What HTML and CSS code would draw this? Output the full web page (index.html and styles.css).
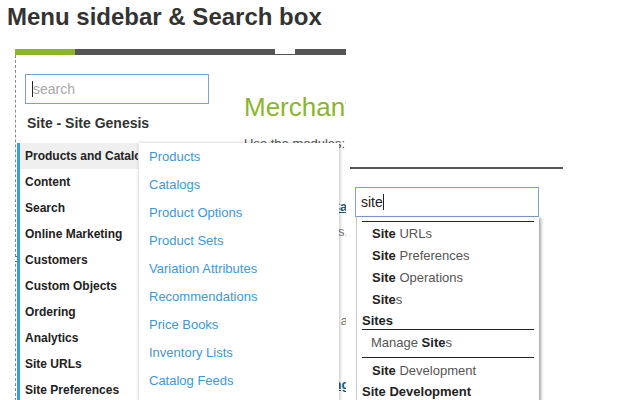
FILE: index.html
```html
<!DOCTYPE html>
<html lang="en">
<head>
    <meta charset="UTF-8">
    <title>Menu sidebar &amp; Search box</title>
    <link rel="stylesheet" href="styles.css">
</head>
<body>

    <h1 class="page-title">Menu sidebar &amp; Search box</h1>

    <div class="demo">

        <!-- Left: Business Manager frame with sidebar -->
        <div class="frame">
            <div class="frame-bar">
                <span class="bar-green"></span>
                <span class="bar-dark bar-wide"></span>
                <span class="bar-gap"></span>
                <span class="bar-dark bar-end"></span>
            </div>

            <div class="frame-body">
                <span class="resize-handle"></span>

                <div class="sidebar">
                    <div class="search-box">
                        <span class="caret"></span><span class="placeholder">search</span>
                    </div>
                    <div class="site-name">Site - Site Genesis</div>

                    <ul class="nav">
                        <li class="active">Products and Catalogs</li>
                        <li>Content</li>
                        <li>Search</li>
                        <li>Online Marketing</li>
                        <li>Customers</li>
                        <li>Custom Objects</li>
                        <li>Ordering</li>
                        <li>Analytics</li>
                        <li>Site URLs</li>
                        <li>Site Preferences</li>
                    </ul>

                    <!-- Flyout for hovered item -->
                    <ul class="flyout">
                        <li><a href="#">Products</a></li>
                        <li><a href="#">Catalogs</a></li>
                        <li><a href="#">Product Options</a></li>
                        <li><a href="#">Product Sets</a></li>
                        <li><a href="#">Variation Attributes</a></li>
                        <li><a href="#">Recommendations</a></li>
                        <li><a href="#">Price Books</a></li>
                        <li><a href="#">Inventory Lists</a></li>
                        <li><a href="#">Catalog Feeds</a></li>
                    </ul>
                </div>

                <div class="main">
                    <h2 class="main-title">Merchant Tools</h2>
                    <p class="intro">Use the modules:</p>

                    <a class="module-link" href="#">Products and Catalogs</a>
                    <p class="module-text">Manage products, catalogs, data</p>

                    <a class="module-link short" href="#">Content</a>
                    <p class="module-text">Manage content assets, libraries, folders, rc</p>

                    <a class="module-link" href="#">Online Marketing Online</a>
                </div>
            </div>
        </div>

        <!-- Right: quick search with suggestions -->
        <div class="quick-search">
            <div class="search-box typed">
                site<span class="caret"></span>

                <div class="suggest">
                    <div class="sep"></div>
                    <div class="item"><b>Site</b> URLs</div>
                    <div class="item"><b>Site</b> Preferences</div>
                    <div class="item"><b>Site</b> Operations</div>
                    <div class="item"><b>Site</b>s</div>
                    <div class="group">Sites</div>
                    <div class="item muted">Manage <b>Site</b>s</div>
                    <div class="sep gap"></div>
                    <div class="item"><b>Site</b> Development</div>
                    <div class="group">Site Development</div>
                </div>
            </div>
        </div>

    </div>

</body>
</html>
```

FILE: styles.css
```css
/* General Styling */
html, body {
    height: 100%;
}

body {
    margin: 0;
    font-family: "Liberation Sans", Arial, sans-serif;
    background-color: #ffffff;
    color: #333333;
    overflow: hidden;
}

.page-title {
    margin: 0;
    padding: 3px 0 0 7px;
    font-size: 24px;
    line-height: 28px;
    font-weight: bold;
    color: #333333;
}

.demo {
    display: flex;
    margin: 18px 0 0 15px;
}

/* Left Frame */
.frame {
    width: 331px;
    height: 351px;
    overflow: hidden;
}

.frame-bar {
    display: flex;
    height: 6px;
}

.bar-green {
    width: 60px;
    background-color: #8db528;
}

.bar-dark {
    background-color: #555555;
}

.bar-wide {
    width: 200px;
}

.bar-gap {
    width: 20px;
    border-bottom: 1px solid #555555;
}

.bar-end {
    width: 51px;
}

.frame-body {
    position: relative;
    display: flex;
    height: 100%;
    border-left: 1px dashed #8a8a8a;
}

.resize-handle {
    position: absolute;
    left: -3px;
    top: 201px;
    width: 4px;
    height: 4px;
    border: 1px solid #666666;
    background-color: #ffffff;
}

/* Sidebar */
.sidebar {
    position: relative;
    width: 228px;
    flex-shrink: 0;
}

.search-box {
    position: relative;
    box-sizing: border-box;
    display: flex;
    align-items: center;
    width: 184px;
    height: 30px;
    margin: 19px 0 0 9px;
    padding-left: 6px;
    border: 1px solid #7f9fd6;
    background-color: #ffffff;
    font-size: 14px;
}

.caret {
    display: inline-block;
    width: 1px;
    height: 16px;
    background-color: #222222;
}

.placeholder {
    color: #a9a9a9;
}

.site-name {
    margin: 10px 0 0 11px;
    font-size: 14px;
    line-height: 18px;
    font-weight: bold;
    color: #333333;
}

.nav {
    list-style: none;
    margin: 11px 0 0 1px;
    padding: 0;
    border-left: 3px solid #38a1c9;
}

.nav li {
    height: 26px;
    line-height: 26px;
    padding-left: 5px;
    font-size: 12px;
    font-weight: bold;
    color: #222222;
    white-space: nowrap;
    overflow: hidden;
}

.nav li.active {
    background-color: #efefef;
}

.flyout {
    position: absolute;
    left: 122px;
    top: 88px;
    width: 200px;
    height: 270px;
    list-style: none;
    margin: 0;
    padding: 0;
    background-color: #ffffff;
    border-left: 1px solid #e4e4e4;
    box-shadow: 1px 0 3px rgba(0, 0, 0, 0.25);
    z-index: 2;
}

.flyout li {
    height: 28px;
    line-height: 28px;
    padding-left: 10px;
    font-size: 13px;
}

.flyout a {
    color: #3d98db;
    text-decoration: none;
}

/* Main Content (behind flyout) */
.main {
    padding-top: 37px;
    white-space: nowrap;
}

.main-title {
    margin: 0;
    font-size: 26px;
    line-height: 30px;
    font-weight: normal;
    color: #8ab62c;
}

.intro {
    margin: 14px 0 0;
    font-size: 13px;
    line-height: 16px;
    color: #555555;
}

.module-link {
    display: block;
    margin-top: 47px;
    font-size: 13px;
    line-height: 16px;
    font-weight: bold;
    color: #1d5a78;
}

.module-link.short {
    margin-top: 56px;
}

.module-text {
    margin: 9px 0 0;
    font-size: 13px;
    line-height: 16px;
    color: #777777;
}

.module-text + .module-link {
    margin-top: 48px;
}

/* Quick Search */
.quick-search {
    width: 213px;
    height: 351px;
    margin-left: 4px;
    padding-top: 120px;
    box-sizing: border-box;
    position: relative;
}

.quick-search::before {
    content: "";
    position: absolute;
    left: 0;
    right: 0;
    top: 118px;
    height: 2px;
    background-color: #555555;
}

.search-box.typed {
    margin: 18px 0 0 5px;
    padding-left: 5px;
    color: #222222;
}

.suggest {
    position: absolute;
    left: 0;
    top: 29px;
    width: 183px;
    height: 200px;
    padding: 4px 5px 0;
    box-sizing: border-box;
    background-color: #ffffff;
    border-left: 1px solid #c9c9c9;
    box-shadow: 2px 1px 3px rgba(0, 0, 0, 0.35);
    font-size: 13px;
    color: #555555;
}

.suggest .sep {
    height: 1px;
    margin-bottom: 1px;
    background-color: #222222;
}

.suggest .sep.gap {
    margin-top: 3px;
    margin-bottom: 2px;
}

.suggest .item {
    height: 22px;
    line-height: 22px;
    padding-left: 10px;
}

.suggest .item b {
    color: #222222;
}

.suggest .item.muted {
    padding-left: 9px;
}

.suggest .group {
    height: 18px;
    line-height: 20px;
    margin-bottom: 2px;
    font-weight: bold;
    color: #222222;
    border-bottom: 1px solid #222222;
}
```
